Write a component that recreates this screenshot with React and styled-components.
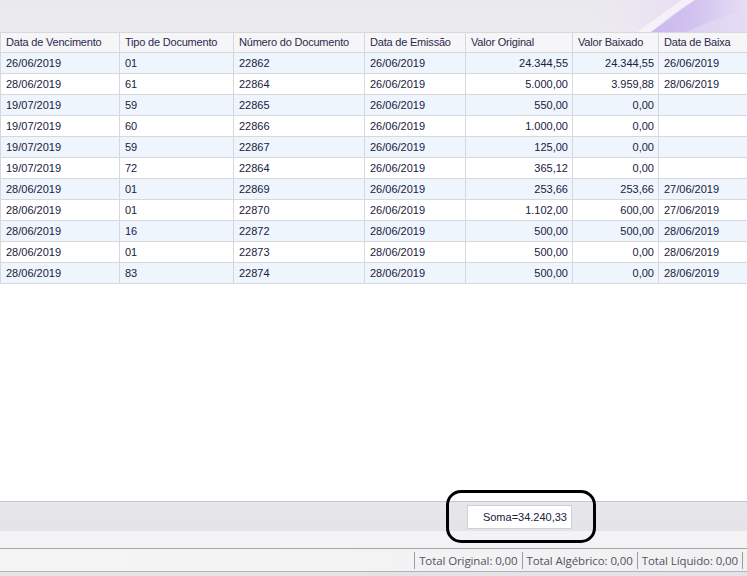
import styled, { createGlobalStyle } from 'styled-components';

const GlobalStyle = createGlobalStyle`
    html, body {
        margin: 0;
        padding: 0;
        background: #ffffff;
    }
`;

const Page = styled.div`
    width: 747px;
    height: 576px;
    display: flex;
    flex-direction: column;
    font-family: "Liberation Sans", Arial, sans-serif;
    font-size: 11px;
    color: #20203c;
    overflow: hidden;
    position: relative;
`;

const TopBand = styled.div`
    height: 32px;
    flex-shrink: 0;
    background: linear-gradient(180deg, #eaeaee 0%, #ececf0 100%);
    position: relative;
    overflow: hidden;
`;

const Swirl = styled.svg`
    position: absolute;
    right: 0;
    top: 0;
`;

const Grid = styled.div`
    display: grid;
    grid-template-columns: 119px 114px 131px 101px 107px 86px 89px;
    border-left: 1px solid #d6d8de;
    border-top: 1px solid #d6d8de;
`;

const HeadCell = styled.div`
    height: 19px;
    line-height: 19px;
    padding: 0 4px 0 5px;
    background: #f6f6f8;
    border-right: 1px solid #d6d8de;
    border-bottom: 1px solid #d6d8de;
    color: #2a2a4c;
    white-space: nowrap;
    overflow: hidden;
    letter-spacing: -0.2px;
`;

const Cell = styled.div`
    height: 20px;
    line-height: 20px;
    padding: 0 4px 0 5px;
    background: ${p => (p.$odd ? '#eef5fd' : '#ffffff')};
    border-right: 1px solid #d6d8de;
    border-bottom: 1px solid #d6d8de;
    text-align: ${p => (p.$num ? 'right' : 'left')};
    white-space: nowrap;
    overflow: hidden;
`;

const Blank = styled.div`
    flex: 1;
    background: #ffffff;
`;

const SumBar = styled.div`
    height: 29px;
    flex-shrink: 0;
    border-top: 1px solid #c6c7cd;
    background: linear-gradient(180deg, #e7e7eb 0%, #e3e3e8 100%);
    display: flex;
    align-items: center;
    padding-left: 467px;
`;

const SumBox = styled.div`
    width: 105px;
    height: 24px;
    line-height: 22px;
    border: 1px solid #d0d1d8;
    background: #ffffff;
    text-align: right;
    padding-right: 4px;
    box-sizing: border-box;
    color: #20203c;
`;

const Spacer = styled.div`
    height: 17px;
    flex-shrink: 0;
    background: #f3f3f5;
`;

const StatusBar = styled.div`
    height: 22px;
    flex-shrink: 0;
    border-top: 1px solid #a4a5ac;
    border-bottom: 1px solid #b4b5bb;
    background: linear-gradient(90deg, #f5f5f6 0%, #f1f1f2 100%);
    display: flex;
    justify-content: flex-end;
    align-items: center;
    padding-right: 4px;
    font-family: "Open Sans", "Liberation Sans", sans-serif;
    font-size: 11.5px;
    color: #53535f;
`;

const StatusItem = styled.div`
    padding: 0 4px;
    border-left: 1px solid #9c9ca4;
    line-height: 17px;
    letter-spacing: -0.1px;
    &:last-child {
        border-right: 1px solid #9c9ca4;
    }
`;

const BottomEdge = styled.div`
    height: 4px;
    flex-shrink: 0;
    background: #e4e4e8;
`;

const Annotation = styled.div`
    position: absolute;
    left: 446px;
    top: 490px;
    width: 150px;
    height: 53px;
    border: 3px solid #000000;
    border-radius: 15px;
    box-sizing: border-box;
`;

const columns = [
    'Data de Vencimento',
    'Tipo de Documento',
    'Número do Documento',
    'Data de Emissão',
    'Valor Original',
    'Valor Baixado',
    'Data de Baixa',
];

const rows = [
    ['26/06/2019', '01', '22862', '26/06/2019', '24.344,55', '24.344,55', '26/06/2019'],
    ['28/06/2019', '61', '22864', '26/06/2019', '5.000,00', '3.959,88', '28/06/2019'],
    ['19/07/2019', '59', '22865', '26/06/2019', '550,00', '0,00', ''],
    ['19/07/2019', '60', '22866', '26/06/2019', '1.000,00', '0,00', ''],
    ['19/07/2019', '59', '22867', '26/06/2019', '125,00', '0,00', ''],
    ['19/07/2019', '72', '22864', '26/06/2019', '365,12', '0,00', ''],
    ['28/06/2019', '01', '22869', '26/06/2019', '253,66', '253,66', '27/06/2019'],
    ['28/06/2019', '01', '22870', '26/06/2019', '1.102,00', '600,00', '27/06/2019'],
    ['28/06/2019', '16', '22872', '28/06/2019', '500,00', '500,00', '28/06/2019'],
    ['28/06/2019', '01', '22873', '28/06/2019', '500,00', '0,00', '28/06/2019'],
    ['28/06/2019', '83', '22874', '28/06/2019', '500,00', '0,00', '28/06/2019'],
];

const App = () => (
    <Page>
        <GlobalStyle />
        <TopBand>
            <Swirl width="170" height="32" viewBox="0 0 170 32">
                <defs>
                    <linearGradient id="wash" x1="0" y1="0" x2="1" y2="0">
                        <stop offset="0" stopColor="#ece6f0" stopOpacity="0" />
                        <stop offset="0.5" stopColor="#eadff3" stopOpacity="0.8" />
                        <stop offset="1" stopColor="#e6dcf4" stopOpacity="1" />
                    </linearGradient>
                    <linearGradient id="band" x1="0" y1="0" x2="1" y2="0">
                        <stop offset="0" stopColor="#c4b2ea" />
                        <stop offset="0.45" stopColor="#cdbdee" />
                        <stop offset="1" stopColor="#e7dff5" />
                    </linearGradient>
                </defs>
                <rect x="0" y="0" width="170" height="32" fill="url(#wash)" />
                <path d="M60 32 C75 22 90 10 105 0 L118 0 C100 10 86 22 74 32 Z" fill="#f6f3fa" opacity="0.9" />
                <path d="M74 32 C88 22 100 12 118 0 L170 0 L170 32 Z" fill="url(#band)" opacity="0.85" />
                <path d="M110 32 C130 22 150 14 170 10 L170 32 Z" fill="#e4dcf3" opacity="0.6" />
            </Swirl>
        </TopBand>
        <Grid>
            {columns.map(c => (
                <HeadCell key={c}>{c}</HeadCell>
            ))}
            {rows.map((r, i) =>
                r.map((v, j) => (
                    <Cell key={i + '-' + j} $odd={i % 2 === 0} $num={j === 4 || j === 5}>
                        {v}
                    </Cell>
                ))
            )}
        </Grid>
        <Blank />
        <SumBar>
            <SumBox>Soma=34.240,33</SumBox>
        </SumBar>
        <Spacer />
        <StatusBar>
            <StatusItem>Total Original: 0,00</StatusItem>
            <StatusItem>Total Algébrico: 0,00</StatusItem>
            <StatusItem>Total Líquido: 0,00</StatusItem>
        </StatusBar>
        <BottomEdge />
        <Annotation />
    </Page>
);

export default App;
